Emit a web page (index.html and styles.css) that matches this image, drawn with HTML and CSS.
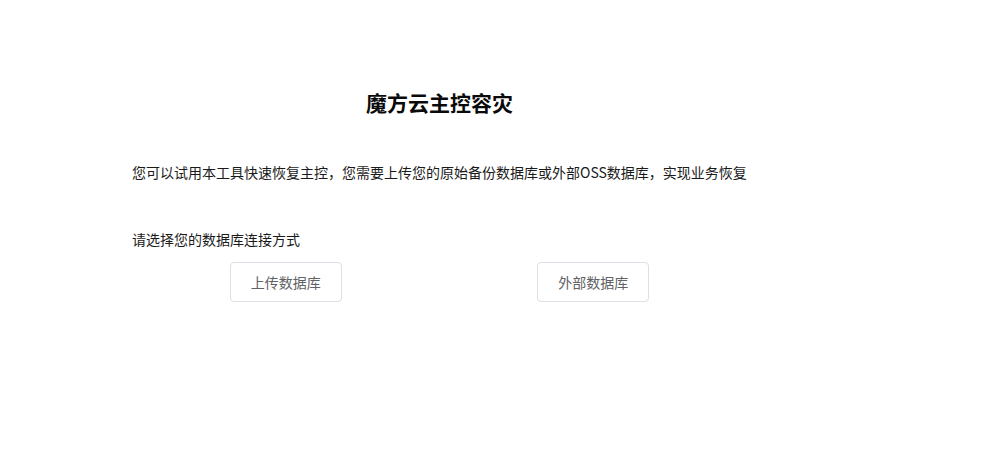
FILE: index.html
```html
<!DOCTYPE html>
<html lang="zh-CN">
<head>
<meta charset="utf-8">
<title>魔方云主控容灾</title>
<link rel="stylesheet" href="styles.css">
</head>
<body>
<div class="page">
  <h1 class="title">魔方云主控容灾</h1>
  <p class="desc">您可以试用本工具快速恢复主控，您需要上传您的原始备份数据库或外部OSS数据库，实现业务恢复</p>
  <p class="label">请选择您的数据库连接方式</p>
  <div class="choices">
    <div class="choice"><button class="btn" type="button">上传数据库</button></div>
    <div class="choice"><button class="btn" type="button">外部数据库</button></div>
  </div>
</div>
</body>
</html>
```
FILE: styles.css
```css
html, body {
  margin: 0;
  padding: 0;
  background: #fff;
}
body {
  font-family: "Noto Sans CJK SC", "Noto Sans", "Liberation Sans", sans-serif;
  color: #1a1a1a;
}
.page {
  width: 615px;
  margin-left: 132px;
  padding-top: 88px;
}
.title {
  margin: 0;
  font-size: 21px;
  line-height: 28px;
  font-weight: 700;
  text-align: center;
  color: #0a0a0a;
}
.desc {
  margin: 46px 0 0;
  font-size: 14px;
  line-height: 20px;
  white-space: nowrap;
}
.label {
  margin: 47px 0 0;
  font-size: 14px;
  line-height: 20px;
}
.choices {
  margin-top: 13px;
  display: grid;
  grid-template-columns: 1fr 1fr;
}
.choice {
  display: flex;
  justify-content: center;
}
.btn {
  font-family: inherit;
  font-size: 14px;
  line-height: 14px;
  padding: 12px 20px;
  border: 1px solid #dcdfe6;
  border-radius: 4px;
  background: #fff;
  color: #606266;
  cursor: pointer;
}
```
